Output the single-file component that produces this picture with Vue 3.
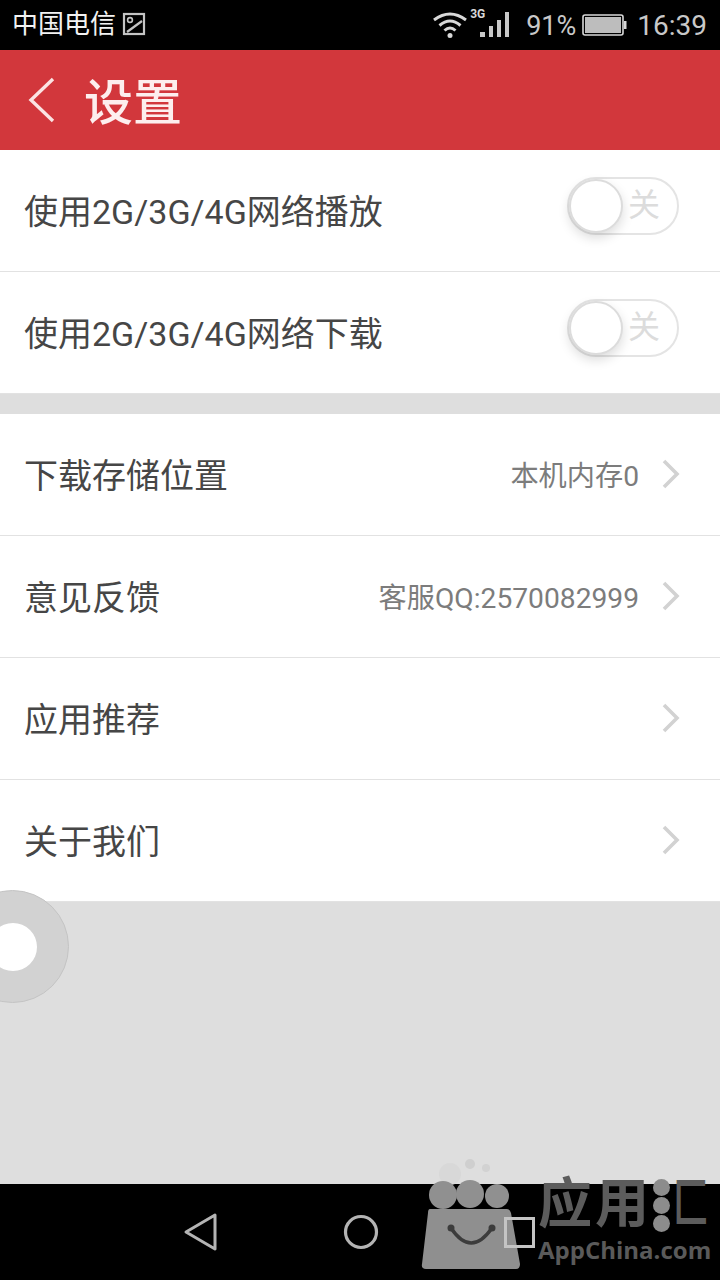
<template>
  <div class="phone">
    <div class="statusBar">
      <div class="statusBar__left">
        <span class="carrier">中国电信</span>
        <svg class="picIcon" width="24" height="24" viewBox="0 0 24 24" fill="none" stroke="#c4c4c4" stroke-width="2.2">
          <rect x="2" y="2" width="20" height="20" />
          <circle cx="8" cy="8" r="2.4" stroke-width="1.6" />
          <path d="M5 20 L20 9" />
        </svg>
      </div>
      <div class="statusBar__right">
        <svg class="wifi" width="36" height="28" viewBox="0 0 36 28" fill="none" stroke="#d8d8d8" stroke-width="3">
          <path d="M2 9 Q18 -3 34 9" />
          <path d="M7.5 14.5 Q18 5.5 28.500 14.500" />
          <path d="M12.500 19.500 Q18 14.500 23.500 19.500" />
          <circle cx="18" cy="24.500" r="2.500" fill="#d8d8d8" stroke="none" />
        </svg>
        <div class="signal">
          <span class="signal__type">3G</span>
          <svg width="32" height="28" viewBox="0 0 32 28" fill="#c8c8c8">
            <rect x="1" y="21" width="5" height="5" />
            <rect x="10" y="15" width="4" height="11" />
            <rect x="18" y="9" width="4" height="17" />
            <rect x="26" y="1" width="4" height="25" />
          </svg>
        </div>
        <span class="percent">91%</span>
        <svg class="battery" width="46" height="24" viewBox="0 0 46 24">
          <rect x="1" y="2" width="40" height="20" rx="2" fill="none" stroke="#d8d8d8" stroke-width="1.6" />
          <rect x="3" y="4" width="36" height="16" fill="#bdbdbd" />
          <rect x="42" y="8" width="2.500" height="8" fill="#d8d8d8" />
        </svg>
        <span class="clock">16:39</span>
      </div>
    </div>

    <div class="header">
      <svg class="header__back" width="30" height="46" viewBox="0 0 30 46" fill="none" stroke="#fbe3e3" stroke-width="3.400">
        <path d="M26 2 L4 23 L26 44" />
      </svg>
      <span class="header__title">设置</span>
    </div>

    <div class="group">
      <div v-for="item in switches" :key="item" class="row">
        <span class="row__name">{{ item }}</span>
        <div class="toggle">
          <span class="toggle__knob"></span>
          <span class="toggle__text">关</span>
        </div>
      </div>
    </div>

    <div class="group group--second">
      <div v-for="item in links" :key="item.name" class="row">
        <span class="row__name">{{ item.name }}</span>
        <div class="row__right">
          <span v-if="item.value" class="row__value">{{ item.value }}</span>
          <svg width="18" height="30" viewBox="0 0 18 30" fill="none" stroke="#d2d2d2" stroke-width="3.600">
            <path d="M2 2 L15 15 L2 28" />
          </svg>
        </div>
      </div>
    </div>

    <div class="spacer"></div>

    <div class="navBar">
      <svg class="navBar__back" width="36" height="40" viewBox="0 0 36 40" fill="none" stroke="#b4b4b4" stroke-width="3" stroke-linejoin="round">
        <path d="M32 3 L3 20 L32 37 Z" />
      </svg>
      <svg class="navBar__home" width="36" height="36" viewBox="0 0 36 36" fill="none" stroke="#b4b4b4" stroke-width="3.200">
        <circle cx="18" cy="18" r="15.500" />
      </svg>
      <span class="navBar__recent"></span>
    </div>

    <!-- плавающая кнопка слева -->
    <div class="floatBtn">
      <span class="floatBtn__dot"></span>
    </div>

    <!-- водяной знак -->
    <div class="mark">
      <svg class="mark__bag" width="104" height="112" viewBox="0 0 104 112">
        <circle cx="49" cy="6" r="5" fill="#cfcfcf" />
        <circle cx="65" cy="10" r="4" fill="#d2d2d2" />
        <circle cx="29" cy="16" r="11" fill="#d8d8d8" />
        <circle cx="22" cy="37" r="14" fill="#909090" />
        <circle cx="49" cy="36" r="14" fill="#909090" />
        <circle cx="76" cy="38" r="12" fill="#909090" />
        <path d="M9 51 H86 Q89 51 90 55 L99 106 Q99 111 95 111 H5 Q0 111 1 106 L7 55 Q7 51 9 51 Z" fill="#8f8f8f" />
        <path d="M30 70 Q50 100 71 70" fill="none" stroke="#3c3c3c" stroke-width="3.500" />
        <circle cx="30" cy="70" r="3.500" fill="#3c3c3c" />
        <circle cx="71" cy="70" r="3.500" fill="#3c3c3c" />
      </svg>
      <div class="mark__brand">
        <div class="mark__name">
          <span class="mark__chars">应用</span>
          <span class="mark__dots"><i></i><i></i><i></i></span>
          <span class="mark__chars mark__chars--last">匚</span>
        </div>
        <div class="mark__url">AppChina.com</div>
      </div>
    </div>
  </div>
</template>

<script setup>
const switches = ['使用2G/3G/4G网络播放', '使用2G/3G/4G网络下载']

const links = [
  { name: '下载存储位置', value: '本机内存0' },
  { name: '意见反馈', value: '客服QQ:2570082999' },
  { name: '应用推荐', value: '' },
  { name: '关于我们', value: '' }
]
</script>

<style>
html, body {
  margin: 0;
  background: #dedede;
}
</style>

<style scoped>
.phone {
  position: relative;
  display: flex;
  flex-direction: column;
  width: 720px;
  height: 1280px;
  overflow: hidden;
  background: #dedede;
  font-family: Roboto, "Noto Sans CJK SC", sans-serif;
}

.statusBar {
  display: flex;
  justify-content: space-between;
  align-items: center;
  height: 50px;
  padding: 0 13px 0 12px;
  box-sizing: border-box;
  background: #000;
  flex-shrink: 0;
}

.statusBar__left,
.statusBar__right {
  display: flex;
  align-items: center;
}

.statusBar__left {
  padding-bottom: 2px;
}

.carrier {
  color: #f2f2f2;
  font-size: 26px;
  line-height: 30px;
  padding-bottom: 1px;
}

.picIcon {
  margin-left: 6px;
}

.wifi {
  margin-right: 11px;
}

.signal {
  position: relative;
  display: flex;
  margin-right: 15px;
}

.signal__type {
  position: absolute;
  left: -9px;
  top: -4px;
  color: #d8d8d8;
  font-size: 12px;
  font-weight: 700;
}

.percent {
  color: #c8c8c8;
  font-size: 27px;
  line-height: 30px;
  padding-top: 2px;
  margin-right: 6px;
}

.battery {
  margin-right: 9px;
}

.clock {
  color: #c8c8c8;
  font-size: 28px;
  line-height: 30px;
  padding-top: 2px;
}

.header {
  display: flex;
  align-items: center;
  height: 100px;
  padding-left: 27px;
  box-sizing: border-box;
  background: #d2373c;
  flex-shrink: 0;
}

.header__title {
  margin-left: 27px;
  padding-bottom: 4px;
  color: #fdeeee;
  font-size: 49px;
  font-weight: 500;
}

.group {
  background: #fff;
  flex-shrink: 0;
}

.group--second {
  margin-top: 20px;
}

.row {
  display: flex;
  justify-content: space-between;
  align-items: center;
  height: 122px;
  padding: 0 40px 2px 24px;
  box-sizing: border-box;
  border-bottom: 1px solid #e2e2e2;
}

.row__name {
  color: #464646;
  font-size: 34px;
}

.row__right {
  display: flex;
  align-items: center;
  gap: 23px;
}

.row__value {
  color: #7c7c7c;
  font-size: 28.2px;
}

.toggle {
  position: relative;
  width: 112px;
  height: 58px;
  margin: 0 1px 8px 0;
  box-sizing: border-box;
  border: 2px solid #e4e4e4;
  border-radius: 29px;
  background: #fff;
}

.toggle__knob {
  position: absolute;
  left: 0;
  top: 0;
  width: 54px;
  height: 54px;
  border: 2px solid #dcdcdc;
  border-radius: 50%;
  background: #fff;
  box-sizing: border-box;
  box-shadow: 0 5px 12px rgba(0, 0, 0, 0.14);
}

.toggle__text {
  position: absolute;
  right: 17px;
  top: 6px;
  color: #dcdcdc;
  font-size: 32px;
  line-height: 40px;
}

.spacer {
  flex: 1;
}

.navBar {
  display: flex;
  align-items: center;
  height: 96px;
  padding-left: 183px;
  box-sizing: border-box;
  background: #000;
  flex-shrink: 0;
}

.navBar__home {
  margin-left: 124px;
}

.navBar__recent {
  width: 31px;
  height: 31px;
  margin-left: 125px;
  box-sizing: border-box;
  border: 3px solid #c4c4c4;
  position: relative;
  z-index: 2;
}

.floatBtn {
  position: absolute;
  left: -44px;
  top: 890px;
  display: flex;
  justify-content: center;
  align-items: center;
  width: 113px;
  height: 113px;
  box-sizing: border-box;
  border: 1px solid #c4c4c4;
  border-radius: 50%;
  background: #d2d2d2;
}

.floatBtn__dot {
  width: 48px;
  height: 48px;
  border-radius: 50%;
  background: #fff;
}

.mark {
  position: absolute;
  left: 421px;
  top: 1158px;
  display: flex;
  width: 299px;
}

.mark__bag {
  flex-shrink: 0;
}

.mark__brand {
  flex-shrink: 0;
  width: 180px;
  margin-left: 13px;
  padding-top: 20px;
}

.mark__name {
  display: flex;
  align-items: center;
  height: 54px;
  color: #5c5c5c;
  font-size: 54px;
  font-weight: 700;
  line-height: 54px;
  white-space: nowrap;
}

.mark__chars {
  letter-spacing: 3px;
}

.mark__chars--last {
  width: 36px;
  margin-left: 3px;
  letter-spacing: 0;
  transform: scaleX(0.66);
  transform-origin: left center;
}

.mark__dots {
  display: flex;
  flex-direction: column;
  gap: 1px;
  margin-left: 1px;
}

.mark__dots i {
  display: block;
  width: 17px;
  height: 17px;
  border-radius: 50%;
  background: #8c8c8c;
}

.mark__url {
  margin-top: 3px;
  color: #5a5a5a;
  font-size: 24px;
  font-weight: 700;
  font-family: "Open Sans", sans-serif;
  line-height: 30px;
  white-space: nowrap;
}
</style>
